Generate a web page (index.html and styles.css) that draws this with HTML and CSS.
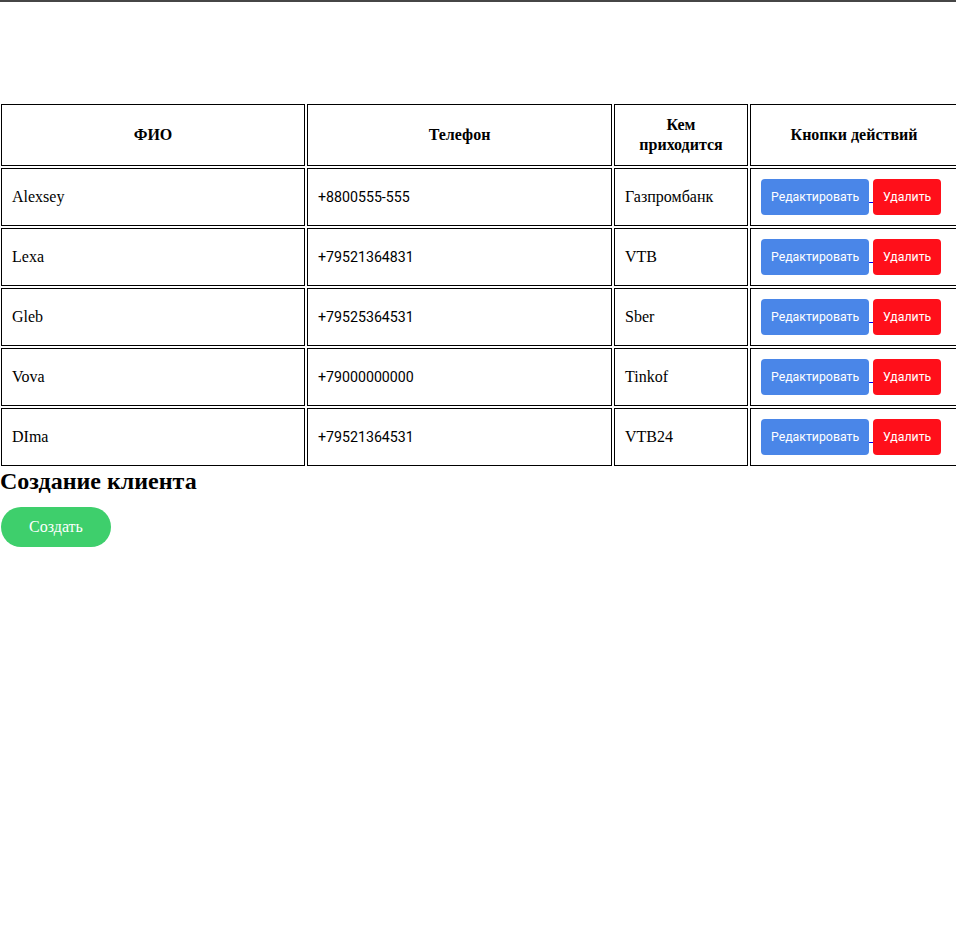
FILE: index.html
```html
<!DOCTYPE html>
<html lang="ru">
<head>
<meta charset="utf-8">
<title>Клиенты</title>
<link rel="stylesheet" href="styles.css">
</head>
<body>
<div class="topbar"></div>
<div class="wrap">
<table class="clients">
  <colgroup>
    <col class="c-name">
    <col class="c-phone">
    <col class="c-rel">
    <col class="c-act">
  </colgroup>
  <thead>
    <tr><th>ФИО</th><th>Телефон</th><th>Кем приходится</th><th>Кнопки действий</th></tr>
  </thead>
  <tbody>
    <tr><td>Alexsey</td><td class="phone">+8800555-555</td><td>Газпромбанк</td><td class="acts"><a href="#" class="lnk"><button class="btn edit">Редактировать</button> </a><a href="#" class="lnk"><button class="btn del">Удалить</button></a></td></tr>
    <tr><td>Lexa</td><td class="phone">+79521364831</td><td>VTB</td><td class="acts"><a href="#" class="lnk"><button class="btn edit">Редактировать</button> </a><a href="#" class="lnk"><button class="btn del">Удалить</button></a></td></tr>
    <tr><td>Gleb</td><td class="phone">+79525364531</td><td>Sber</td><td class="acts"><a href="#" class="lnk"><button class="btn edit">Редактировать</button> </a><a href="#" class="lnk"><button class="btn del">Удалить</button></a></td></tr>
    <tr><td>Vova</td><td class="phone">+79000000000</td><td>Tinkof</td><td class="acts"><a href="#" class="lnk"><button class="btn edit">Редактировать</button> </a><a href="#" class="lnk"><button class="btn del">Удалить</button></a></td></tr>
    <tr><td>DIma</td><td class="phone">+79521364531</td><td>VTB24</td><td class="acts"><a href="#" class="lnk"><button class="btn edit">Редактировать</button> </a><a href="#" class="lnk"><button class="btn del">Удалить</button></a></td></tr>
  </tbody>
</table>
</div>
<h2 class="title">Создание клиента</h2>
<button class="create">Создать</button>
</body>
</html>
```
FILE: styles.css
```css
html, body {
  overflow-x: hidden;
}
body {
  margin: 0;
  font-family: "Liberation Serif", "Times New Roman", serif;
  font-size: 16px;
  color: #000;
  background: #fff;
}
.topbar {
  height: 100px;
  border-top: 2px solid #464646;
}
.wrap {
  margin-left: -1px;
}
.clients {
  border-spacing: 2px;
  table-layout: fixed;
  width: 961px;
}
.c-name { width: 304px; }
.c-phone { width: 305px; }
.c-rel { width: 134px; }
.c-act { width: 208px; }
.clients th,
.clients td {
  border: 1px solid #000;
  padding: 10px;
}
.clients th {
  font-weight: bold;
  font-size: 16px;
  line-height: 20px;
  text-align: center;
}
.clients td {
  text-align: left;
  vertical-align: middle;
}
.phone {
  font-family: Roboto, "Liberation Sans", sans-serif;
  font-size: 14.2px;
}
.acts {
  white-space: nowrap;
}
.lnk {
  color: #0000ee;
}
.btn {
  font-family: Roboto, "Liberation Sans", sans-serif;
  font-size: 12.3px;
  color: #fff;
  border: none;
  border-radius: 4px;
  height: 36px;
  padding: 0 10px;
  vertical-align: middle;
  cursor: pointer;
}
.edit { background: #4a86e8; }
.del { background: #ff0f1a; }
.title {
  margin: 0;
  font-size: 24px;
}
.create {
  margin-top: 12px;
  margin-left: 1px;
  width: 110px;
  height: 40px;
  border: none;
  border-radius: 20px;
  background: #3ecf6c;
  color: #fff;
  font-family: "Liberation Serif", "Times New Roman", serif;
  font-size: 16px;
}
```
